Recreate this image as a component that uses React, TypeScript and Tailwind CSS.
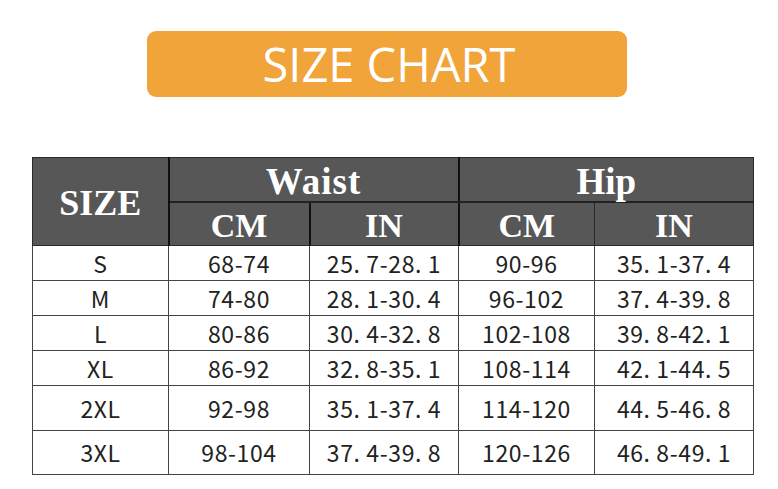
const rows = [
  { size: 'S', wcm: '68-74', win: '25. 7-28. 1', hcm: '90-96', hin: '35. 1-37. 4', h: 'h-[35px]' },
  { size: 'M', wcm: '74-80', win: '28. 1-30. 4', hcm: '96-102', hin: '37. 4-39. 8', h: 'h-[35px]' },
  { size: 'L', wcm: '80-86', win: '30. 4-32. 8', hcm: '102-108', hin: '39. 8-42. 1', h: 'h-[35px]' },
  { size: 'XL', wcm: '86-92', win: '32. 8-35. 1', hcm: '108-114', hin: '42. 1-44. 5', h: 'h-[35px]' },
  { size: '2XL', wcm: '92-98', win: '35. 1-37. 4', hcm: '114-120', hin: '44. 5-46. 8', h: 'h-[45px]' },
  { size: '3XL', wcm: '98-104', win: '37. 4-39. 8', hcm: '120-126', hin: '46. 8-49. 1', h: 'h-[44px]' },
];

const serif = "font-['Liberation_Serif',serif] font-bold text-white leading-none";
const body = "font-['Noto_Sans_CJK_SC',sans-serif] text-[23px] tracking-[0.6px] text-[#222] leading-none text-center border border-[#444]";

export default function App() {
  return (
    <div className="w-[778px] h-[489px] bg-white overflow-hidden">
      {/* title banner */}
      <div className="ml-[147px] mt-[31px] w-[480px] h-[66px] rounded-[9px] bg-[#f0a43a] flex items-center justify-center">
        <span className="font-['Open_Sans',sans-serif] text-[47px] leading-none text-white pl-[4px]">
          SIZE CHART
        </span>
      </div>

      <table className="ml-[32px] mt-[60px] w-[721px] table-fixed border-collapse">
        <colgroup>
          <col className="w-[136px]" />
          <col className="w-[141px]" />
          <col className="w-[149px]" />
          <col className="w-[136px]" />
          <col className="w-[159px]" />
        </colgroup>
        <thead>
          <tr className="h-[44px] bg-[#575757]">
            <th rowSpan={2} className={`${serif} text-[36px] pt-[2px] border border-[#2a2a2a] border-r-2 border-r-[#111]`}>
              SIZE
            </th>
            <th colSpan={2} className={`${serif} text-[37px] pt-[5px] border border-[#2a2a2a] border-b-2 border-b-[#222] tracking-[1px]`}>
              Waist
            </th>
            <th colSpan={2} className={`${serif} text-[37px] pt-[5px] border border-[#2a2a2a] border-l-2 border-l-[#111] border-b-2 border-b-[#222]`}>
              Hip
            </th>
          </tr>
          <tr className="h-[44px] bg-[#575757]">
            <th className={`${serif} text-[34px] pt-[5px] border border-[#2a2a2a] border-r-2 border-r-[#111]`}>CM</th>
            <th className={`${serif} text-[34px] pt-[5px] border border-[#2a2a2a]`}>IN</th>
            <th className={`${serif} text-[34px] pt-[5px] border border-[#2a2a2a] border-l-2 border-l-[#111]`}>CM</th>
            <th className={`${serif} text-[34px] pt-[5px] border border-[#2a2a2a]`}>IN</th>
          </tr>
        </thead>
        <tbody>
          {rows.map((r) => (
            <tr key={r.size} className={r.h}>
              <td className={body}>{r.size}</td>
              <td className={body}>{r.wcm}</td>
              <td className={body}>{r.win}</td>
              <td className={body}>{r.hcm}</td>
              <td className={body}>{r.hin}</td>
            </tr>
          ))}
        </tbody>
      </table>
    </div>
  );
}
